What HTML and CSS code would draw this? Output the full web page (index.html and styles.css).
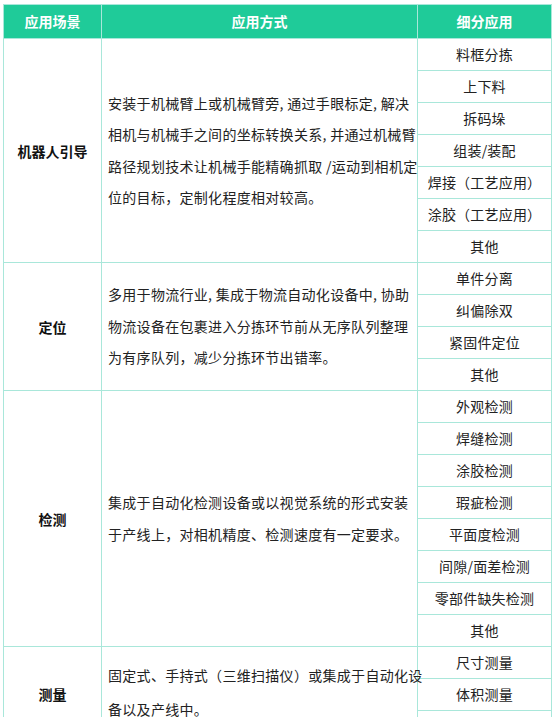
FILE: index.html
```html
<!DOCTYPE html>
<html lang="zh-CN">
<head>
<meta charset="utf-8">
<title>应用场景</title>
<link rel="stylesheet" href="styles.css">
</head>
<body>
<table class="grid">
  <colgroup>
    <col class="c1">
    <col class="c2">
    <col class="c3">
  </colgroup>
  <thead>
    <tr class="head">
      <th>应用场景</th>
      <th>应用方式</th>
      <th>细分应用</th>
    </tr>
  </thead>
  <tbody>
    <tr>
      <td class="scene" rowspan="7">机器人引导</td>
      <td class="desc" rowspan="7">安装于机械臂上或机械臂旁, 通过手眼标定, 解决<br>相机与机械手之间的坐标转换关系, 并通过机械臂<br>路径规划技术让机械手能精确抓取 /运动到相机定<br>位的目标，定制化程度相对较高。</td>
      <td class="sub">料框分拣</td>
    </tr>
    <tr><td class="sub">上下料</td></tr>
    <tr><td class="sub">拆码垛</td></tr>
    <tr><td class="sub">组装/装配</td></tr>
    <tr><td class="sub">焊接（工艺应用）</td></tr>
    <tr><td class="sub">涂胶（工艺应用）</td></tr>
    <tr><td class="sub">其他</td></tr>

    <tr>
      <td class="scene" rowspan="4">定位</td>
      <td class="desc" rowspan="4">多用于物流行业, 集成于物流自动化设备中, 协助<br>物流设备在包裹进入分拣环节前从无序队列整理<br>为有序队列，减少分拣环节出错率。</td>
      <td class="sub">单件分离</td>
    </tr>
    <tr><td class="sub">纠偏除双</td></tr>
    <tr><td class="sub">紧固件定位</td></tr>
    <tr><td class="sub">其他</td></tr>

    <tr>
      <td class="scene" rowspan="8">检测</td>
      <td class="desc" rowspan="8">集成于自动化检测设备或以视觉系统的形式安装<br>于产线上，对相机精度、检测速度有一定要求。</td>
      <td class="sub">外观检测</td>
    </tr>
    <tr><td class="sub">焊缝检测</td></tr>
    <tr><td class="sub">涂胶检测</td></tr>
    <tr><td class="sub">瑕疵检测</td></tr>
    <tr><td class="sub">平面度检测</td></tr>
    <tr><td class="sub">间隙/面差检测</td></tr>
    <tr><td class="sub">零部件缺失检测</td></tr>
    <tr><td class="sub">其他</td></tr>

    <tr>
      <td class="scene scene-last" rowspan="3">测量</td>
      <td class="desc desc-last" rowspan="3">固定式、手持式（三维扫描仪）或集成于自动化设<br>备以及产线中。</td>
      <td class="sub">尺寸测量</td>
    </tr>
    <tr><td class="sub">体积测量</td></tr>
    <tr><td class="sub">其他</td></tr>
  </tbody>
</table>
</body>
</html>
```
FILE: styles.css
```css
html, body {
  margin: 0;
  padding: 0;
  background: #ffffff;
}

body {
  padding: 4px 0 0 3px;
  font-family: "Noto Sans CJK SC", "Noto Sans", sans-serif;
  font-size: 14px;
  color: #222222;
}

.grid {
  border-collapse: collapse;
  table-layout: fixed;
  width: 548px;
}

.c1 { width: 98px; }
.c2 { width: 316px; }
.c3 { width: 134px; }

.grid th,
.grid td {
  border: 1px solid #a9e7da;
  padding: 0;
}

.grid .head th {
  background: #1fcb99;
  color: #ffffff;
  font-weight: bold;
  height: 33px;
  line-height: 33px;
  text-align: center;
}

.grid .scene {
  text-align: center;
  vertical-align: middle;
  font-weight: bold;
  color: #111111;
}

.grid .scene-last {
  padding-bottom: 2px;
}

.grid .desc {
  vertical-align: middle;
  padding: 0 2px 0 6px;
  line-height: 31.5px;
  letter-spacing: 0.3px;
  white-space: nowrap;
}

.grid .desc-last {
  line-height: 34px;
  padding-bottom: 6px;
}

.grid .sub {
  height: 31px;
  line-height: 31px;
  text-align: center;
  white-space: nowrap;
  letter-spacing: 0.2px;
}
```
